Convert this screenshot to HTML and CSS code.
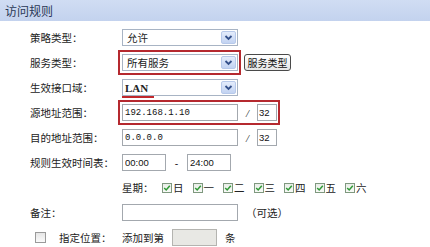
FILE: index.html
```html
<!DOCTYPE html>
<html lang="zh-CN">
<head>
<meta charset="UTF-8">
<title>访问规则</title>
<link rel="stylesheet" href="styles.css">
</head>
<body>
<div class="panel">
  <div class="panel-title">访问规则</div>
  <div class="form">
    <div class="row">
      <span class="label">策略类型：</span>
      <div class="select"><span class="select-text">允许</span><span class="arrow"><svg width="15" height="13" viewBox="0 0 15 13"><path d="M4.5 5 L7.5 8 L10.5 5" fill="none" stroke="#34508a" stroke-width="1.8"/></svg></span></div>
    </div>
    <div class="row">
      <span class="label">服务类型：</span>
      <div class="mark">
        <div class="select"><span class="select-text">所有服务</span><span class="arrow"><svg width="15" height="13" viewBox="0 0 15 13"><path d="M4.5 5 L7.5 8 L10.5 5" fill="none" stroke="#34508a" stroke-width="1.8"/></svg></span></div>
      </div>
      <button class="btn">服务类型</button>
    </div>
    <div class="row">
      <span class="label">生效接口域：</span>
      <div class="select"><span class="select-text lan">LAN</span><span class="underline"></span><span class="arrow"><svg width="15" height="13" viewBox="0 0 15 13"><path d="M4.5 5 L7.5 8 L10.5 5" fill="none" stroke="#34508a" stroke-width="1.8"/></svg></span></div>
    </div>
    <div class="row">
      <span class="label">源地址范围：</span>
      <div class="mark">
        <input class="field ip" type="text" value="192.168.1.10">
        <span class="slash">/</span>
        <input class="field mask" type="text" value="32">
      </div>
    </div>
    <div class="row">
      <span class="label">目的地址范围：</span>
      <input class="field ip" type="text" value="0.0.0.0">
      <span class="slash">/</span>
      <input class="field mask" type="text" value="32">
    </div>
    <div class="row">
      <span class="label">规则生效时间表：</span>
      <input class="field time" type="text" value="00:00">
      <span class="dash">-</span>
      <input class="field time" type="text" value="24:00">
    </div>
    <div class="row">
      <span class="label"></span>
      <span class="week-label">星期：</span>
      <div class="days">
        <span class="day"><span class="check on"><svg width="8" height="8" viewBox="0 0 8 8"><path d="M1.2 4 L3.2 6 L6.8 1.8" fill="none" stroke="#2f9a35" stroke-width="1.5"/></svg></span>日</span>
        <span class="day"><span class="check on"><svg width="8" height="8" viewBox="0 0 8 8"><path d="M1.2 4 L3.2 6 L6.8 1.8" fill="none" stroke="#2f9a35" stroke-width="1.5"/></svg></span>一</span>
        <span class="day"><span class="check on"><svg width="8" height="8" viewBox="0 0 8 8"><path d="M1.2 4 L3.2 6 L6.8 1.8" fill="none" stroke="#2f9a35" stroke-width="1.5"/></svg></span>二</span>
        <span class="day"><span class="check on"><svg width="8" height="8" viewBox="0 0 8 8"><path d="M1.2 4 L3.2 6 L6.8 1.8" fill="none" stroke="#2f9a35" stroke-width="1.5"/></svg></span>三</span>
        <span class="day"><span class="check on"><svg width="8" height="8" viewBox="0 0 8 8"><path d="M1.2 4 L3.2 6 L6.8 1.8" fill="none" stroke="#2f9a35" stroke-width="1.5"/></svg></span>四</span>
        <span class="day"><span class="check on"><svg width="8" height="8" viewBox="0 0 8 8"><path d="M1.2 4 L3.2 6 L6.8 1.8" fill="none" stroke="#2f9a35" stroke-width="1.5"/></svg></span>五</span>
        <span class="day"><span class="check on"><svg width="8" height="8" viewBox="0 0 8 8"><path d="M1.2 4 L3.2 6 L6.8 1.8" fill="none" stroke="#2f9a35" stroke-width="1.5"/></svg></span>六</span>
      </div>
    </div>
    <div class="row">
      <span class="label">备注：</span>
      <input class="field note" type="text" value="">
      <span class="hint">（可选）</span>
    </div>
    <div class="row">
      <span class="label pos"><span class="check off"></span><span class="pos-text">指定位置：</span></span>
      <span class="add-text">添加到第</span>
      <input class="field index" type="text" value="" disabled>
      <span class="unit">条</span>
    </div>
  </div>
</div>
</body>
</html>
```

FILE: styles.css
```css
html, body { margin: 0; padding: 0; background: #fff; overflow: hidden; }
body { font-family: "Noto Sans CJK SC", "Noto Sans", sans-serif; font-size: 10.5px; color: #222; }

.panel-title { height: 21px; line-height: 21px; padding-left: 5px; font-size: 12px; color: #2a3856; background: linear-gradient(#d0ddf3, #c3d2ee); }
.form { padding-top: 4px; padding-left: 30px; }
.row { display: flex; align-items: center; height: 25px; }
.label { width: 92px; flex: none; white-space: nowrap; }

.select { position: relative; display: flex; align-items: center; box-sizing: border-box; width: 116px; height: 17px; border: 1px solid #a8b4c4; background: #fff; }
.select-text { padding-left: 4px; }
.select-text.lan { font-family: "Liberation Serif", serif; font-size: 11px; font-weight: bold; padding-left: 2px; }
.arrow { margin-left: auto; margin-right: 1px; width: 15px; height: 13px; box-sizing: border-box; border: 1px solid #b7c9ea; border-radius: 2px; background: linear-gradient(#e4ecfb, #c2d3f2); display: flex; }
.arrow svg { margin: -1px; }
.underline { position: absolute; left: -1px; bottom: -3px; width: 32px; height: 2px; background: #c0282c; }

.mark { display: flex; align-items: center; margin: -4px 0 -4px -4px; padding: 2px 1px 2px 2px; border: 2px solid #b5292f; }

.btn { margin-left: 3px; width: 47px; height: 17px; padding: 0; border: 1px solid #4a4a4a; border-radius: 3px; background: linear-gradient(#ffffff, #e6e6e6); font-family: inherit; font-size: 10px; color: #111; }

.field { box-sizing: border-box; height: 17px; margin: 0; padding: 0 2px; border: 1px solid #a3a8ae; background: #fff; font-family: "Liberation Sans", sans-serif; font-size: 9.5px; color: #111; outline: none; }
.field.ip { width: 116px; font-family: "Liberation Mono", monospace; font-size: 9px; }
.field.mask { width: 20px; padding: 0 1px; }
.field.time { width: 44px; }
.field.note { width: 116px; }
.field.index { width: 45px; background: #e8e8e4; border-color: #b4b4b0; }
.slash { width: 19px; text-align: center; font-family: "Liberation Serif", serif; font-style: italic; font-size: 11px; }
.dash { width: 21px; text-align: center; font-family: "Liberation Sans", sans-serif; }

.week-label { width: 40px; }
.days { display: flex; gap: 9px; }
.day { display: flex; align-items: center; gap: 1px; }
.check { display: inline-flex; align-items: center; justify-content: center; box-sizing: border-box; width: 10px; height: 10px; border: 1px solid #7f987f; background: linear-gradient(#e9eee8, #f8faf7); }
.check.off { width: 11px; height: 11px; border-color: #9a9a9a; background: linear-gradient(#e6e6e6, #fafafa); }

.hint { margin-left: 8px; }
.pos { display: flex; align-items: center; }
.pos .check { margin-left: 5px; }
.pos-text { margin-left: 13px; }
.add-text { width: 50px; }
.unit { margin-left: 8px; }
```
